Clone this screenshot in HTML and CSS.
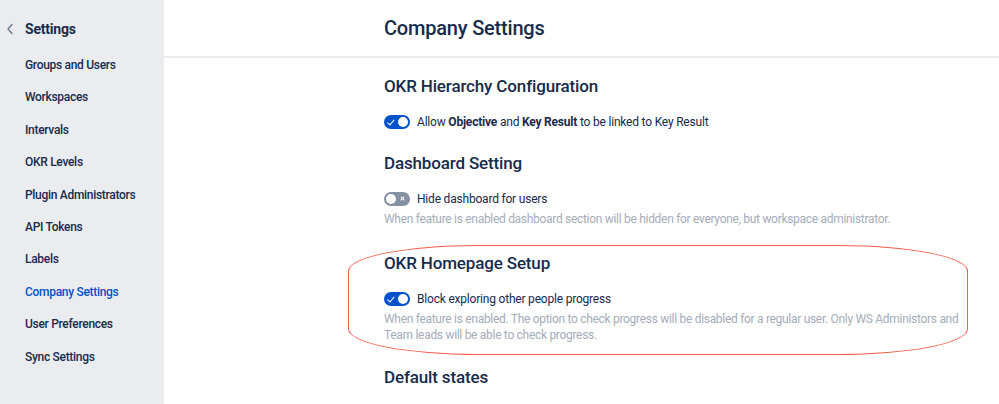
FILE: index.html
```html
<!DOCTYPE html>
<html lang="en">
<head>
<meta charset="utf-8">
<title>Company Settings</title>
<link rel="stylesheet" href="styles.css">
</head>
<body>
<div class="app">
  <aside class="sidebar">
    <div class="side-head">
      <svg class="chev" width="8" height="12" viewBox="0 0 8 12"><path d="M6 1.5 L2 6 L6 10.5" fill="none" stroke="#6b778c" stroke-width="1.3" stroke-linecap="round" stroke-linejoin="round"/></svg>
      <span class="side-title">Settings</span>
    </div>
    <nav class="side-nav">
      <a class="nav-item">Groups and Users</a>
      <a class="nav-item">Workspaces</a>
      <a class="nav-item">Intervals</a>
      <a class="nav-item">OKR Levels</a>
      <a class="nav-item">Plugin Administrators</a>
      <a class="nav-item">API Tokens</a>
      <a class="nav-item">Labels</a>
      <a class="nav-item active">Company Settings</a>
      <a class="nav-item">User Preferences</a>
      <a class="nav-item">Sync Settings</a>
    </nav>
  </aside>
  <main class="main">
    <header class="page-head">
      <h1 class="page-title">Company Settings</h1>
    </header>
    <div class="content">
      <section class="section">
        <h2 class="sec-title">OKR Hierarchy Configuration</h2>
        <div class="row">
          <span class="toggle on"><span class="knob"></span></span>
          <span class="label">Allow <b>Objective</b> and <b>Key Result</b> to be linked to Key Result</span>
        </div>
      </section>
      <section class="section">
        <h2 class="sec-title">Dashboard Setting</h2>
        <div class="row">
          <span class="toggle off"><span class="knob"></span></span>
          <span class="label">Hide dashboard for users</span>
        </div>
        <p class="desc">When feature is enabled dashboard section will be hidden for everyone, but workspace administrator.</p>
      </section>
      <section class="section highlight">
        <h2 class="sec-title">OKR Homepage Setup</h2>
        <div class="row">
          <span class="toggle on"><span class="knob"></span></span>
          <span class="label">Block exploring other people progress</span>
        </div>
        <p class="desc">When feature is enabled. The option to check progress will be disabled for a regular user. Only WS Administors and Team leads will be able to check progress.</p>
        <div class="ring"></div>
      </section>
      <section class="section">
        <h2 class="sec-title">Default states</h2>
      </section>
    </div>
  </main>
</div>
</body>
</html>
```

FILE: styles.css
```css
* { box-sizing: border-box; }
html, body { margin: 0; padding: 0; }
body {
  font-family: Roboto, "Liberation Sans", sans-serif;
  color: #172b4d;
  background: #fff;
  width: 999px;
  height: 404px;
  overflow: hidden;
}
.app { display: flex; height: 404px; }
.sidebar {
  width: 164px;
  flex: none;
  background: #ebecf0;
  padding-top: 19px;
}
.side-head {
  display: flex;
  align-items: center;
  height: 20px;
  padding-left: 6px;
}
.chev { margin-right: 11px; }
.side-title {
  font-size: 14px;
  font-weight: 700;
  letter-spacing: -0.2px;
}
.side-nav {
  display: flex;
  flex-direction: column;
  padding-top: 17px;
}
.nav-item {
  display: block;
  padding-left: 25px;
  height: 32.4px;
  line-height: 18px;
  font-size: 12px;
  font-weight: 500;
  color: #172b4d;
  letter-spacing: -0.3px;
}
.nav-item.active { color: #0052cc; }
.main { flex: 1; min-width: 0; }
.page-head {
  height: 58px;
  border-bottom: 2px solid #ebecf0;
  padding-left: 220px;
  padding-top: 15px;
}
.page-title {
  margin: 0;
  font-size: 20px;
  line-height: 26px;
  font-weight: 500;
  letter-spacing: -0.2px;
}
.content {
  padding-left: 220px;
  padding-top: 16px;
  width: 800px;
}
.section { position: relative; margin-bottom: 19px; }
.sec-title {
  margin: 0 0 14px;
  font-size: 17px;
  line-height: 24px;
  font-weight: 500;
  letter-spacing: -0.15px;
}
.row {
  display: flex;
  align-items: center;
  height: 20px;
  gap: 7px;
}
.label { font-size: 12px; letter-spacing: -0.2px; }
.label b { font-weight: 700; }
.toggle {
  position: relative;
  width: 26px;
  height: 14px;
  border-radius: 7px;
  flex: none;
}
.toggle.on { background: #0052cc; }
.toggle.off { background: #8590a2; }
.knob {
  position: absolute;
  top: 2px;
  width: 10px;
  height: 10px;
  border-radius: 50%;
  background: #fff;
}
.toggle.on .knob { right: 2px; }
.toggle.off .knob { left: 2px; }
.toggle.on::before {
  content: "";
  position: absolute;
  left: 5px;
  top: 3px;
  width: 2.5px;
  height: 5.5px;
  border-right: 1.4px solid #fff;
  border-bottom: 1.4px solid #fff;
  transform: rotate(40deg);
}
.toggle.off::before, .toggle.off::after {
  content: "";
  position: absolute;
  right: 5px;
  top: 6.3px;
  width: 5px;
  height: 1.4px;
  background: #fff;
  transform: rotate(45deg);
}
.toggle.off::after { transform: rotate(-45deg); }
.desc {
  margin: 2px 0 0;
  font-size: 12px;
  line-height: 16px;
  color: #a5adba;
  width: 580px;
  letter-spacing: -0.3px;
}
.highlight { margin-top: 24px; margin-bottom: 22px; }
.ring {
  position: absolute;
  left: -36px;
  top: -6px;
  width: 620px;
  height: 110px;
  border: 1.3px solid #f2604e;
  border-radius: 130px / 26px;
  pointer-events: none;
}
```
